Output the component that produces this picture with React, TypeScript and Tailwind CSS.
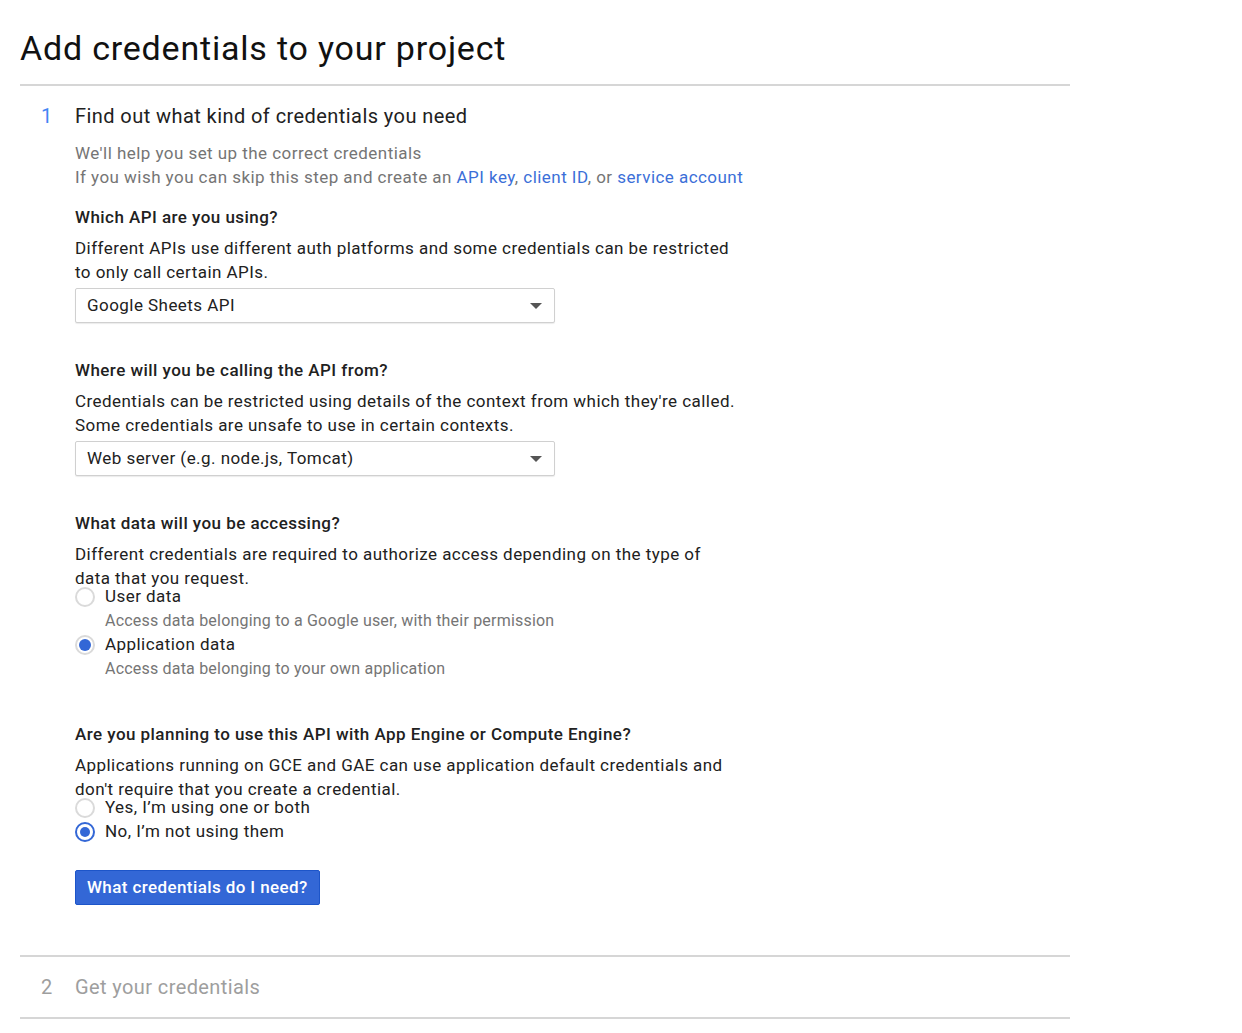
import { ReactNode } from 'react';

function Select({ value }: { value: string }) {
  return (
    <div className="flex h-[35px] w-[480px] items-center justify-between rounded-[2px] border border-[#d0d0d0] bg-white pl-[11px] pr-[12px] shadow-[0_1px_1px_rgba(0,0,0,0.08)]">
      <span className="text-[17px] tracking-[0.45px] text-[#212121]">{value}</span>
      <svg width="12" height="6" viewBox="0 0 12 6">
        <path d="M0 0 L12 0 L6 6 Z" fill="#555" />
      </svg>
    </div>
  );
}

function Radio({ state, label, hint }: { state: 'off' | 'on' | 'focus'; label: string; hint?: string }) {
  return (
    <div>
      <div className="flex h-[24px] items-center gap-[10px]">
        {state === 'off' && <span className="h-[20px] w-[20px] rounded-full border-2 border-[#dadada] bg-white" />}
        {state === 'on' && (
          <span className="flex h-[20px] w-[20px] items-center justify-center rounded-full border-2 border-[#dadada] bg-white">
            <span className="h-[12px] w-[12px] rounded-full bg-[#3367d6]" />
          </span>
        )}
        {state === 'focus' && (
          <span className="flex h-[20px] w-[20px] items-center justify-center rounded-full border-2 border-[#3367d6] bg-white">
            <span className="h-[10px] w-[10px] rounded-full bg-[#3367d6]" />
          </span>
        )}
        <span className="text-[17px] tracking-[0.45px] text-[#212121]">{label}</span>
      </div>
      {hint && (
        <div className="h-[24px] pl-[30px] text-[16px] leading-[24px] tracking-[0.2px] text-[#757575]">{hint}</div>
      )}
    </div>
  );
}

function Question({ title, lines, children, first }: { title: string; lines: string[]; children: ReactNode; first?: boolean }) {
  return (
    <div className={first ? 'mt-[16px]' : 'mt-[35px]'}>
      <div className="text-[17px] font-medium leading-[24px] tracking-[0.45px] text-[#212121]">{title}</div>
      <div className="mt-[7px] text-[17px] leading-[24px] tracking-[0.45px] text-[#212121]">
        {lines.map((l) => (
          <div key={l}>{l}</div>
        ))}
      </div>
      {children}
    </div>
  );
}

export default function App() {
  return (
    <div className="min-h-screen bg-white pl-[20px] pt-[28px] font-['Roboto',sans-serif]">
      <h1 className="text-[34px] leading-[40px] tracking-[0.8px] text-[#111]">Add credentials to your project</h1>
      <div className="w-[1050px]">
        <div className="mt-[16px] h-[2px] bg-[#d6d6d6]" />

        <div className="pb-[50px]">
          <div className="mt-[16px] flex h-[28px] items-center">
            <span className="w-[55px] pl-[21px] text-[20px] text-[#4285f4]">1</span>
            <span className="text-[20px] tracking-[0.43px] text-[#212121]">Find out what kind of credentials you need</span>
          </div>

          <div className="pl-[55px]">
            <div className="mt-[11px] text-[17px] leading-[24px] tracking-[0.45px] text-[#757575]">
              <div>We'll help you set up the correct credentials</div>
              <div>
                If you wish you can skip this step and create an{' '}
                <span className="text-[#3b6fd8]">API key</span>,{' '}
                <span className="text-[#3b6fd8]">client ID</span>, or{' '}
                <span className="text-[#3b6fd8]">service account</span>
              </div>
            </div>

            <Question
              first
              title="Which API are you using?"
              lines={[
                'Different APIs use different auth platforms and some credentials can be restricted',
                'to only call certain APIs.',
              ]}
            >
              <div className="mt-[4px]">
                <Select value="Google Sheets API" />
              </div>
            </Question>

            <Question
              title="Where will you be calling the API from?"
              lines={[
                "Credentials can be restricted using details of the context from which they're called.",
                'Some credentials are unsafe to use in certain contexts.',
              ]}
            >
              <div className="mt-[4px]">
                <Select value="Web server (e.g. node.js, Tomcat)" />
              </div>
            </Question>

            <Question
              title="What data will you be accessing?"
              lines={[
                'Different credentials are required to authorize access depending on the type of',
                'data that you request.',
              ]}
            >
              <div className="-mt-[5px]">
                <Radio state="off" label="User data" hint="Access data belonging to a Google user, with their permission" />
                <Radio state="on" label="Application data" hint="Access data belonging to your own application" />
              </div>
            </Question>

            <div className="mt-[41px]">
              <div className="text-[17px] font-medium leading-[24px] tracking-[0.45px] text-[#212121]">
                Are you planning to use this API with App Engine or Compute Engine?
              </div>
              <div className="mt-[7px] text-[17px] leading-[24px] tracking-[0.45px] text-[#212121]">
                <div>Applications running on GCE and GAE can use application default credentials and</div>
                <div>don't require that you create a credential.</div>
              </div>
              <div className="-mt-[5px]">
                <Radio state="off" label="Yes, I’m using one or both" />
                <Radio state="focus" label="No, I’m not using them" />
              </div>
            </div>

            <button className="mt-[26px] h-[35px] rounded-[2px] border border-[#1d55c9] bg-[#3367d6] px-[11px] text-[17px] font-medium tracking-[0.4px] text-white">
              What credentials do I need?
            </button>
          </div>
        </div>

        <div className="h-[2px] bg-[#d6d6d6]" />
        <div className="flex h-[60px] items-center">
          <span className="w-[55px] pl-[21px] text-[20px] text-[#9e9e9e]">2</span>
          <span className="text-[20px] tracking-[0.4px] text-[#9e9e9e]">Get your credentials</span>
        </div>
        <div className="h-[2px] bg-[#d6d6d6]" />
      </div>
    </div>
  );
}
